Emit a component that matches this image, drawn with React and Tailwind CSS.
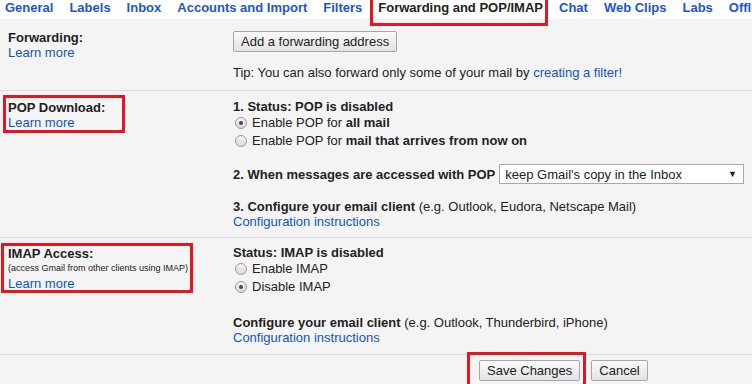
import { useState } from 'react';

const tabs = ['General', 'Labels', 'Inbox', 'Accounts and Import', 'Filters', 'Forwarding and POP/IMAP', 'Chat', 'Web Clips', 'Labs', 'Offline'];

function RedFrame({ className }) {
    return <div className={`absolute border-[3px] border-[#e4161f] pointer-events-none ${className}`}></div>;
}

function Radio({ checked, onChange, children }) {
    return (
        <label className="flex items-center h-[18px] leading-[18px] cursor-pointer" onClick={onChange}>
            <span className="ml-[2px] mr-[5px] w-[12px] h-[12px] rounded-full border border-[#9a9a9a] bg-gradient-to-b from-[#f4f4f4] to-[#d8d8d8] flex items-center justify-center">
                {checked && <span className="w-[4px] h-[4px] rounded-full bg-[#4a4a4a]"></span>}
            </span>
            <span>{children}</span>
        </label>
    );
}

function GrayButton({ children, className = '' }) {
    return (
        <button className={`h-[21px] px-[7px] border border-[#a6a6a6] rounded-[2px] bg-gradient-to-b from-[#fafafa] to-[#e2e2e2] text-[13px] leading-[19px] text-[#222] ${className}`}>
            {children}
        </button>
    );
}

export default function App() {
    const [pop, setPop] = useState('all');
    const [imap, setImap] = useState('off');

    return (
        <div className="w-[752px] h-[384px] overflow-hidden bg-[#f4f4f4] text-[13px] leading-[15px] text-[#222] font-['Liberation_Sans',Arial,sans-serif]">

            {/* Tabs */}
            <div className="h-[19px] bg-white flex gap-4 pl-[5px] whitespace-nowrap font-bold">
                {tabs.map(t => (
                    t === 'Forwarding and POP/IMAP' ? (
                        <span key={t} className="relative text-[#222]">
                            {t}
                            <RedFrame className="-left-[8px] -right-[5px] -top-[4px] -bottom-[7px] z-10" />
                        </span>
                    ) : (
                        <span key={t} className="text-[#2255cc]">{t}</span>
                    )
                ))}
            </div>

            {/* Forwarding */}
            <div className="flex pt-[11px] pb-[10px] border-b border-[#dcdcdc]">
                <div className="w-[233px] pl-2 shrink-0">
                    <div className="font-bold">Forwarding:</div>
                    <div className="text-[#1155cc]">Learn more</div>
                </div>
                <div className="flex-1">
                    <GrayButton className="mt-px">Add a forwarding address</GrayButton>
                    <div className="mt-[13px]">
                        Tip: You can also forward only some of your mail by <span className="text-[#1155cc]">creating a filter!</span>
                    </div>
                </div>
            </div>

            {/* POP */}
            <div className="flex pt-[9px] pb-[8px] border-b border-[#dcdcdc]">
                <div className="w-[233px] pl-2 shrink-0">
                    <div className="relative w-fit">
                        <div className="font-bold">POP Download:</div>
                        <div className="text-[#1155cc]">Learn more</div>
                        <RedFrame className="-left-[5px] -top-[5px] -bottom-[3px] w-[122px]" />
                    </div>
                </div>
                <div className="flex-1 pr-[8px]">
                    <div className="font-bold leading-[14px]">1. Status: POP is disabled</div>
                    <Radio checked={pop === 'all'} onChange={() => setPop('all')}>
                        Enable POP for <b>all mail</b>
                    </Radio>
                    <Radio checked={pop === 'now'} onChange={() => setPop('now')}>
                        Enable POP for <b>mail that arrives from now on</b>
                    </Radio>
                    <div className="mt-[14px] flex items-center h-[20px]">
                        <span className="font-bold whitespace-nowrap">2. When messages are accessed with POP</span>
                        <div className="ml-[4px] flex-1 h-[20px] bg-white border border-[#a9a9a9] flex items-center justify-between pl-[5px] pr-[6px]">
                            <span>keep Gmail's copy in the Inbox</span>
                            <span className="text-[9px]">▼</span>
                        </div>
                    </div>
                    <div className="mt-[15px]">
                        <b>3. Configure your email client</b> (e.g. Outlook, Eudora, Netscape Mail)
                    </div>
                    <div className="text-[#1155cc]">Configuration instructions</div>
                </div>
            </div>

            {/* IMAP */}
            <div className="flex pt-[8px] pb-[9px] border-b border-[#dcdcdc]">
                <div className="w-[233px] pl-2 shrink-0">
                    <div className="relative w-fit">
                        <div className="font-bold">IMAP Access:</div>
                        <div className="text-[9px]">(access Gmail from other clients using IMAP)</div>
                        <div className="text-[#1155cc]">Learn more</div>
                        <RedFrame className="-left-[7px] -top-[3px] -bottom-[2px] w-[192px]" />
                    </div>
                </div>
                <div className="flex-1">
                    <div className="font-bold leading-[14px]">Status: IMAP is disabled</div>
                    <Radio checked={imap === 'on'} onChange={() => setImap('on')}>Enable IMAP</Radio>
                    <Radio checked={imap === 'off'} onChange={() => setImap('off')}>Disable IMAP</Radio>
                    <div className="mt-[19px]">
                        <b>Configure your email client</b> (e.g. Outlook, Thunderbird, iPhone)
                    </div>
                    <div className="text-[#1155cc]">Configuration instructions</div>
                </div>
            </div>

            {/* Actions */}
            <div className="flex items-start pt-[5px] pl-[479px] gap-[11px]">
                <div className="relative">
                    <GrayButton>Save Changes</GrayButton>
                    <RedFrame className="-left-[12px] -right-[6px] -top-[8px] -bottom-[8px]" />
                </div>
                <GrayButton>Cancel</GrayButton>
            </div>
        </div>
    );
}
